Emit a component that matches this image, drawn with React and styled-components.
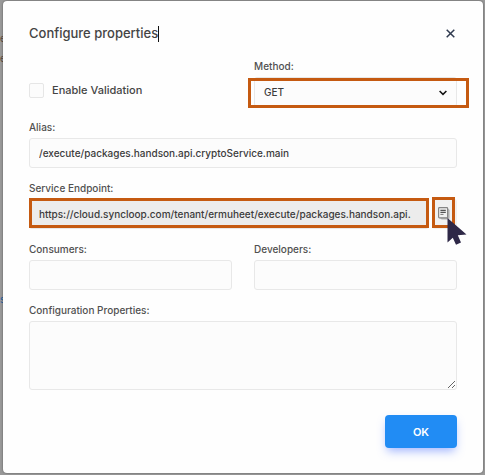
import React from 'react';
import styled, { createGlobalStyle, css } from 'styled-components';

const GlobalStyle = createGlobalStyle`
	*, *::before, *::after {
		box-sizing: border-box;
	}
	body {
		margin: 0;
		background: #999;
		font-family: Inter, 'Liberation Sans', sans-serif;
		color: #3b3b3b;
	}
	button, input, select, textarea {
		font: inherit;
		color: inherit;
	}
`;

const Backdrop = styled.div`
	position: relative;
	min-height: 100vh;
	padding: 1px 2px 2px 3px;
	overflow: hidden;
	background: #999;
`;

const Behind = styled.span`
	position: absolute;
	left: 0;
	top: ${(props) => props.$top}px;
	font-size: 10px;
	line-height: 16px;
	color: ${(props) => props.$color};
`;

const Dialog = styled.form`
	position: relative;
	display: flex;
	flex-direction: column;
	gap: 12px;
	padding: 24px 26px 25px;
	background: #fefefe;
	border-radius: 4px;
	box-shadow: 0 0 2px rgba(0, 0, 0, 0.5);
`;

const Header = styled.header`
	display: flex;
	align-items: center;
	justify-content: space-between;
	height: 17px;
	margin-bottom: 4px;
`;

const Title = styled.h1`
	display: flex;
	align-items: center;
	margin: 0;
	font-size: 13px;
	font-weight: 500;
	line-height: 17px;
	color: #444;
`;

const Caret = styled.span`
	width: 1px;
	height: 16px;
	background: #111;
`;

const CloseButton = styled.button`
	display: flex;
	margin: 0;
	padding: 2px;
	border: 0;
	background: none;
	color: #2f3a4f;
	cursor: pointer;
`;

const Columns = styled.div`
	display: grid;
	grid-template-columns: 1fr 1fr;
	gap: 22px;
`;

const Field = styled.div`
	display: flex;
	flex-direction: column;
	gap: 3px;
	min-width: 0;
`;

const Label = styled.label`
	font-size: 10px;
	font-weight: 500;
	line-height: 16px;
	color: #505050;
`;

const CheckRow = styled.label`
	display: flex;
	align-items: center;
	gap: 8px;
	padding-top: 15px;
	font-size: 11px;
	font-weight: 500;
	line-height: 16px;
	color: #444;
`;

const Checkbox = styled.input`
	appearance: none;
	width: 15px;
	height: 15px;
	margin: 0;
	border: 1px solid #e6e6e6;
	border-radius: 2px;
	background: #fcfcfc;

	&:checked {
		background: #218cf4;
	}
`;

const control = css`
	width: 100%;
	height: 30px;
	padding: 0 9px;
	border: 1px solid #e8e8e8;
	border-radius: 3px;
	background: #fcfcfc;
	font-size: 10px;
	font-weight: 500;
	outline: none;
`;

const TextInput = styled.input`
	${control}
`;

const EndpointInput = styled.input`
	${control}
	padding-right: 4px;
	background: #ececec;
`;

const TextArea = styled.textarea`
	${control}
	display: block;
	height: 69px;
	padding: 8px 9px;
	resize: vertical;
`;

const SelectWrap = styled.div`
	position: relative;

	svg {
		position: absolute;
		right: 10px;
		top: 13px;
		pointer-events: none;
	}
`;

const Select = styled.select`
	${control}
	appearance: none;
`;

const EndpointRow = styled.div`
	display: flex;
	gap: 3px;
`;

const EndpointBox = styled.div`
	position: relative;
	flex: 1;
	min-width: 0;
`;

const CopyBox = styled.div`
	position: relative;
	width: 25px;
`;

const CopyButton = styled.button`
	display: flex;
	align-items: center;
	width: 100%;
	height: 30px;
	padding: 0 0 2px 6px;
	border: 0;
	border-radius: 3px;
	background: #f1f1f1;
	cursor: pointer;
`;

const Highlight = styled.span`
	position: absolute;
	inset: ${(props) => props.$inset};
	border: 3px solid #c55a11;
	pointer-events: none;
`;

const Pointer = styled.svg`
	position: absolute;
	left: 15px;
	top: 17px;
	pointer-events: none;
`;

const OkButton = styled.button`
	align-self: flex-end;
	width: 72px;
	height: 33px;
	margin-top: 13px;
	border: 0;
	border-radius: 4px;
	background: #218cf4;
	box-shadow: 0 5px 10px -2px rgba(70, 110, 255, 0.5);
	color: #fff;
	font-size: 11px;
	font-weight: 600;
	cursor: pointer;
`;

const CloseIcon = () => (
	<svg width="9" height="9" viewBox="0 0 9 9" fill="none" stroke="currentColor" strokeWidth="1.5">
		<path d="M0.7 0.7 8.3 8.3M8.3 0.7 0.7 8.3" />
	</svg>
);

const ChevronIcon = () => (
	<svg width="8" height="6" viewBox="0 0 8 6" fill="none" stroke="#111" strokeWidth="1.5">
		<path d="M0.6 1 4 4.4 7.4 1" />
	</svg>
);

const CopyIcon = () => (
	<svg width="12" height="13" viewBox="0 0 12 13">
		<path d="M2 2.2 10 1.4 11.6 3V11.2L10.2 12.6H3.6L2 11Z" fill="#b4b4b4" />
		<rect x="0.6" y="0.6" width="9" height="10.2" rx="0.8" fill="#f0f0f0" stroke="#858585" strokeWidth="1.2" />
		<path d="M2.4 3.4H7.8M2.4 5.4H7.8" stroke="#555" strokeWidth="1.3" />
		<path d="M2.4 7.4H5.5" stroke="#777" />
	</svg>
);

const noop = (event) => event.preventDefault();

const App = () => (
	<>
		<GlobalStyle />
		<Backdrop>
			<Behind aria-hidden="true" $top={30} $color="#5d4a3c">e</Behind>
			<Behind aria-hidden="true" $top={50} $color="#5d4a3c">e</Behind>
			<Behind aria-hidden="true" $top={291} $color="#1f5f9f">s</Behind>
			<Dialog onSubmit={noop}>
				<Header>
					<Title>
						Configure properties
						<Caret />
					</Title>
					<CloseButton type="button" aria-label="Close">
						<CloseIcon />
					</CloseButton>
				</Header>
				<Columns>
					<CheckRow>
						<Checkbox type="checkbox" />
						Enable Validation
					</CheckRow>
					<Field>
						<Label htmlFor="method">Method:</Label>
						<SelectWrap>
							<Select id="method" defaultValue="GET">
								<option>GET</option>
								<option>POST</option>
								<option>PUT</option>
								<option>DELETE</option>
							</Select>
							<ChevronIcon />
							<Highlight $inset="1px -12px -1px -6px" />
						</SelectWrap>
					</Field>
				</Columns>
				<Field>
					<Label htmlFor="alias">Alias:</Label>
					<TextInput id="alias" defaultValue="/execute/packages.handson.api.cryptoService.main" />
				</Field>
				<Field>
					<Label htmlFor="endpoint">Service Endpoint:</Label>
					<EndpointRow>
						<EndpointBox>
							<EndpointInput
								id="endpoint"
								readOnly
								value="https://cloud.syncloop.com/tenant/ermuheet/execute/packages.handson.api."
							/>
							<Highlight $inset="-1px 0 1px 0" />
						</EndpointBox>
						<CopyBox>
							<CopyButton type="button" aria-label="Copy endpoint">
								<CopyIcon />
							</CopyButton>
							<Highlight $inset="-2px 2px 1px 0" />
							<Pointer width="21" height="29" viewBox="0 0 21 29">
								<path d="M0.5 2V26.5L5.8 21.8 9 28.8 14 26.6 10.8 19.3 19.5 18.6Z" fill="#2e2847" />
							</Pointer>
						</CopyBox>
					</EndpointRow>
				</Field>
				<Columns>
					<Field>
						<Label htmlFor="consumers">Consumers:</Label>
						<TextInput id="consumers" />
					</Field>
					<Field>
						<Label htmlFor="developers">Developers:</Label>
						<TextInput id="developers" />
					</Field>
				</Columns>
				<Field>
					<Label htmlFor="config">Configuration Properties:</Label>
					<TextArea id="config" />
				</Field>
				<OkButton type="submit">OK</OkButton>
			</Dialog>
		</Backdrop>
	</>
);

export default App;
